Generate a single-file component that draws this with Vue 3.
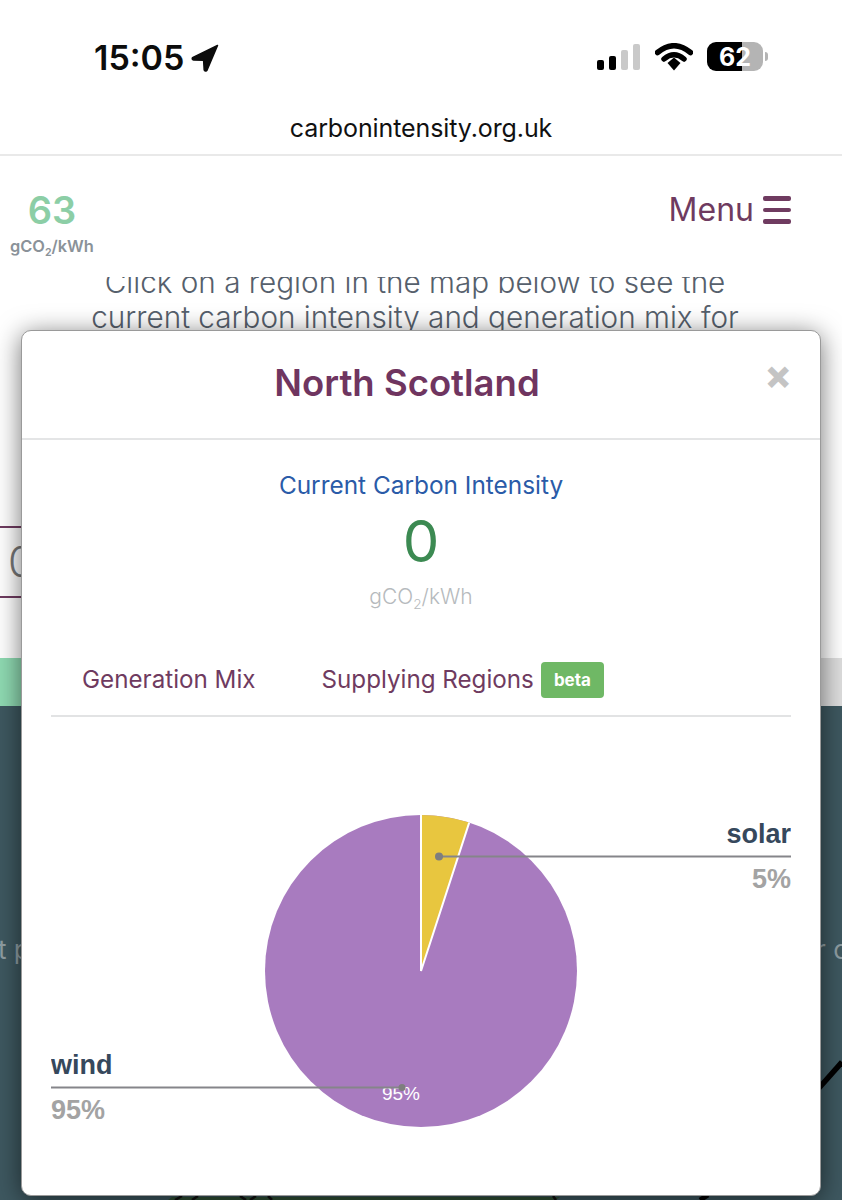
<script setup>
const bars = [
  { h: 10, on: true },
  { h: 14, on: true },
  { h: 20, on: false },
  { h: 26, on: false },
]
const tabs = ['Generation Mix', 'Supplying Regions']
</script>

<template>
  <div class="phone">
    <header class="status">
      <div class="status-left">
        <span class="time">15:05</span>
        <svg class="arrow" width="28" height="28" viewBox="0 0 28 28">
          <path d="M26.5 1.5 L1.5 13.6 Q0.6 15.5 2.6 15.9 L12.6 16.2 L13.2 26 Q14 28 15.9 26.4 Z" fill="#0c0c0c" stroke="#0c0c0c" stroke-width="1.5" stroke-linejoin="round" />
        </svg>
      </div>
      <div class="status-right">
        <div class="signal">
          <i v-for="(b, i) in bars" :key="i" class="bar" :class="{ on: b.on }" :style="{ height: b.h + 'px' }"></i>
        </div>
        <svg class="wifi" width="38" height="28" viewBox="0 0 38 28">
          <path d="M2.5 9.5 Q19 -4 35.5 9.5" fill="none" stroke="#000" stroke-width="5.5" stroke-linecap="round" />
          <path d="M9 16 Q19 7.5 29 16" fill="none" stroke="#000" stroke-width="5.5" stroke-linecap="round" />
          <path d="M12.5 20 L19 14.5 L25.5 20 L19 27.5 Z" fill="#000" />
        </svg>
        <div class="battery">
          <div class="battery-body"><span>62</span></div>
          <i class="battery-cap"></i>
        </div>
      </div>
    </header>
    <div class="urlbar">carbonintensity.org.uk</div>
    <nav class="sitebar">
      <div class="intensity">
        <b>63</b>
        <span>gCO<sub>2</sub>/kWh</span>
      </div>
      <div class="menu">
        Menu
        <span class="burger"><i></i><i></i><i></i></span>
      </div>
    </nav>
    <main class="content">
      <p class="intro">Click on a region in the map below to see the<br />current carbon intensity and generation mix for</p>
      <div class="searchbox">0</div>
    </main>
    <div class="greenband"></div>
    <section class="dark">
      <p class="dark-text"><span>t p</span><span>r c</span></p>
      <svg class="map" width="842" height="494" viewBox="0 706 842 494">
        <path d="M168 1200 L172 1197 L560 1197 L556 1200 Z" fill="#2f5035" />
        <path d="M175 1200 L182 1196 M192 1200 L198 1196 M240 1196 L246 1200 M250 1200 L256 1196 M268 1196 L272 1200 M553 1196 L556 1200" stroke="#111" stroke-width="2.5" fill="none" />
        <path d="M700 1200 L708 1195" stroke="#000" stroke-width="5" fill="none" />
        <path d="M819 1088 L842 1062" stroke="#000" stroke-width="5.5" fill="none" />
      </svg>
    </section>

    <div class="modal">
      <div class="modal-head">
        <h2>North Scotland</h2>
        <span class="close">×</span>
      </div>
      <div class="modal-body">
        <div class="cc-label">Current Carbon Intensity</div>
        <div class="cc-value">0</div>
        <div class="cc-unit">gCO<sub>2</sub>/kWh</div>
        <div class="tabs">
          <span class="tab">{{ tabs[0] }}</span>
          <span class="tab">{{ tabs[1] }}<em class="beta">beta</em></span>
        </div>
        <svg class="pie" width="740" height="440" viewBox="51 750 740 440">
          <circle cx="421" cy="971" r="156" fill="#a87bbf" />
          <path d="M421 971 L421 815 A156 156 0 0 1 469.2 822.6 Z" fill="#e8c63f" />
          <path d="M421 815 L421 971 L469.2 822.6" fill="none" stroke="#fff" stroke-width="2" />
          <text x="401" y="1100" class="inner">95%</text>
          <path d="M439 856.5 H791" stroke="#85858a" stroke-width="2" />
          <circle cx="439" cy="856.5" r="4" fill="#7e7e7e" />
          <path d="M51 1087.5 H403" stroke="#85858a" stroke-width="2" />
          <circle cx="402" cy="1087.5" r="3.5" fill="#7e7e7e" />
          <text x="791" y="843" text-anchor="end" class="name">solar</text>
          <text x="791" y="888" text-anchor="end" class="pct">5%</text>
          <text x="51" y="1074" class="name">wind</text>
          <text x="51" y="1119" class="pct">95%</text>
        </svg>
      </div>
    </div>
  </div>
</template>

<style scoped>
.phone {
  position: relative;
  width: 842px;
  height: 1200px;
  overflow: hidden;
  background: #fff;
  display: flex;
  flex-direction: column;
  font-family: Inter, "Liberation Sans", sans-serif;
}
.status {
  height: 100px;
  flex: none;
  display: flex;
  justify-content: space-between;
  align-items: flex-start;
  padding: 40px 74px 0 94px;
  box-sizing: border-box;
}
.status-left {
  display: flex;
  align-items: center;
  gap: 7px;
}
.time {
  font-size: 34px;
  line-height: 36px;
  font-weight: 600;
  color: #0c0c0c;
}
.status-right {
  display: flex;
  align-items: center;
  margin-top: 2px;
}
.signal {
  display: flex;
  align-items: flex-end;
  gap: 5px;
  height: 27px;
  margin-right: 15px;
}
.bar {
  width: 7px;
  border-radius: 2px;
  background: #c9c9c9;
}
.bar.on {
  background: #000;
}
.wifi {
  margin-right: 14px;
}
.battery {
  display: flex;
  align-items: center;
  gap: 2px;
}
.battery-body {
  width: 56px;
  height: 29px;
  border-radius: 9px;
  background: linear-gradient(90deg, #000 63%, #b4b4b4 63%);
  display: flex;
  align-items: center;
  justify-content: center;
  color: #fff;
  font-size: 25px;
  font-weight: 700;
}
.battery-cap {
  width: 3px;
  height: 9px;
  border-radius: 0 3px 3px 0;
  background: #b4b4b4;
}
.urlbar {
  height: 56px;
  flex: none;
  box-sizing: border-box;
  border-bottom: 2px solid #e9e9e9;
  text-align: center;
  font-size: 25px;
  line-height: 56px;
  color: #111;
  letter-spacing: -0.1px;
}
.sitebar {
  height: 121px;
  flex: none;
  display: flex;
  justify-content: space-between;
  align-items: flex-start;
  padding: 0 51px 0 10px;
  box-sizing: border-box;
  position: relative;
  z-index: 1;
  background: #fff;
}
.intensity {
  display: flex;
  flex-direction: column;
  align-items: center;
  padding-top: 32px;
}
.intensity b {
  font-size: 38px;
  line-height: 44px;
  font-weight: 600;
  color: #8ccea6;
}
.intensity span {
  font-size: 16.4px;
  line-height: 22px;
  margin-top: 3px;
  font-weight: 600;
  color: #8a9299;
}
.intensity sub,
.cc-unit sub {
  font-size: 0.65em;
  line-height: 0;
}
.menu {
  display: flex;
  align-items: center;
  gap: 9px;
  margin-top: 36px;
  font-size: 32px;
  line-height: 36px;
  color: #6f3b60;
}
.burger {
  display: flex;
  flex-direction: column;
  gap: 7px;
  width: 28px;
}
.burger i {
  height: 4.5px;
  border-radius: 2px;
  background: #6f3b60;
}
.content {
  height: 381px;
  flex: none;
  overflow: hidden;
  position: relative;
  background: #fff;
}
.intro {
  margin: -12px 0 0;
  padding-right: 12px;
  text-align: center;
  font-size: 29.7px;
  line-height: 35px;
  font-weight: 300;
  color: #56606c;
  white-space: nowrap;
}
.searchbox {
  margin-top: 191px;
  width: 500px;
  height: 68px;
  border-top: 2px solid #6f3b60;
  border-bottom: 2px solid #6f3b60;
  padding-left: 8px;
  font-size: 42px;
  line-height: 68px;
  font-weight: 300;
  color: #777;
}
.greenband {
  height: 48px;
  flex: none;
  background: linear-gradient(90deg, #8fdab2 50%, #dedede 50%);
}
.dark {
  height: 494px;
  flex: none;
  position: relative;
  background: #3e5860;
}
.dark-text {
  position: absolute;
  top: 228px;
  left: 0;
  right: 0;
  margin: 0;
  display: flex;
  justify-content: space-between;
  font-size: 26px;
  color: #8f9ea3;
}
.dark-text span:first-child {
  margin-left: -2px;
}
.dark-text span:last-child {
  margin-right: -6px;
}
.map {
  position: absolute;
  top: 0;
  left: 0;
}
.modal {
  position: absolute;
  left: 21px;
  top: 330px;
  z-index: 2;
  width: 800px;
  height: 866px;
  box-sizing: border-box;
  background: #fff;
  border: 1px solid #9a9a9a;
  border-radius: 10px;
  box-shadow: 0 4px 26px rgba(0, 0, 0, 0.55);
}
.modal-head {
  position: relative;
  height: 109px;
  box-sizing: border-box;
  border-bottom: 2px solid #e4e5e6;
  display: flex;
  align-items: center;
  justify-content: center;
  padding: 0 28px 4px 0;
}
.modal-head h2 {
  margin: 0;
  font-size: 36.5px;
  line-height: 44px;
  font-weight: 600;
  color: #6f3560;
}
.close {
  position: absolute;
  right: 28px;
  top: 22px;
  font-size: 40px;
  line-height: 44px;
  font-weight: 800;
  color: #c4c4c4;
}
.modal-body {
  padding: 29px 29px 0;
  display: flex;
  flex-direction: column;
  align-items: center;
}
.cc-label {
  font-size: 24.4px;
  line-height: 32px;
  color: #2a5ba8;
  white-space: nowrap;
}
.cc-value {
  font-size: 58px;
  line-height: 64px;
  margin-top: 8px;
  font-weight: 400;
  color: #3c8a52;
}
.cc-unit {
  margin-top: 9px;
  font-size: 21px;
  line-height: 30px;
  font-weight: 300;
  color: #b6babd;
}
.tabs {
  align-self: stretch;
  display: flex;
  gap: 66px;
  margin-top: 41px;
  padding: 0 0 8px 31px;
  height: 54px;
  border-bottom: 2px solid #e2e3e4;
  font-size: 24.2px;
  line-height: 36px;
  color: #6f3b60;
  align-items: center;
}
.tab {
  display: flex;
  align-items: center;
}
.beta {
  margin-left: 7px;
  width: 63px;
  height: 36px;
  border-radius: 4px;
  background: #6fb865;
  color: #fff;
  font-style: normal;
  font-size: 17px;
  font-weight: 700;
  text-align: center;
  line-height: 36px;
}
.pie {
  flex: none;
  margin-top: 33px;
}
.inner {
  font: 19px "Liberation Sans", sans-serif;
  fill: #fff;
  text-anchor: middle;
}
.name {
  font: 700 27px "Liberation Sans", sans-serif;
  fill: #36485c;
}
.pct {
  font: 700 27px "Liberation Sans", sans-serif;
  fill: #a3a3a3;
}
</style>
